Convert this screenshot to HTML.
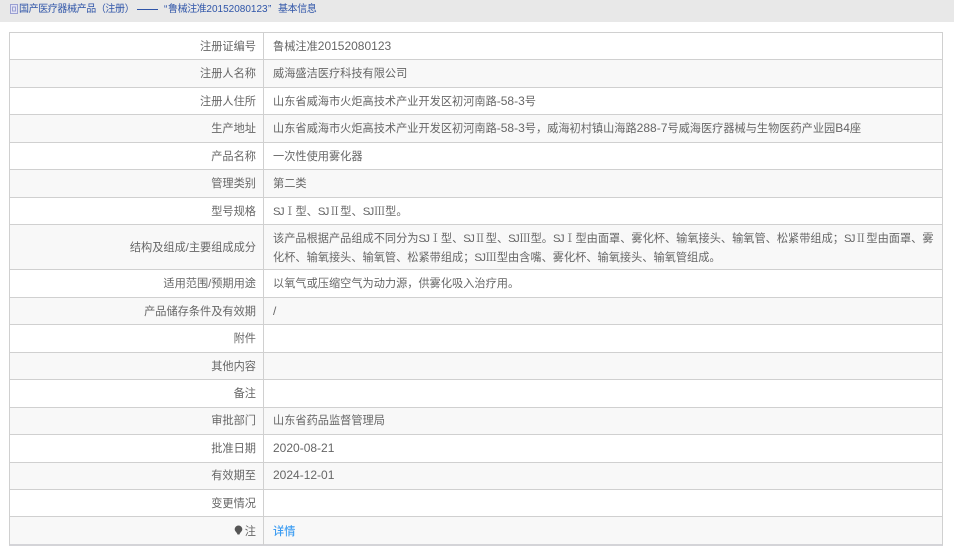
<!DOCTYPE html>
<html lang="zh-CN"><head><meta charset="utf-8">
<style>
html,body{margin:0;padding:0;background:#fff;}
body{width:954px;height:555px;position:relative;overflow:hidden;font-family:"Liberation Sans","Noto Sans CJK SC",sans-serif;font-size:11.2px;color:#666;}
#hd{position:absolute;left:0;top:0;width:954px;height:22px;background:#e8e8e8;}
#hd span{position:absolute;top:3px;line-height:14px;color:#2f55a8;white-space:nowrap;font-size:10px;letter-spacing:-.4px;}
#hd span b{font-weight:normal;font-size:10px;line-height:0;letter-spacing:0;}
#hd span i{font-style:normal;font-family:"Noto Sans CJK TC",sans-serif;line-height:0;}
#dash{position:absolute;left:137px;top:9px;width:21px;height:1px;background:#2f55a8;}
.hl{position:absolute;left:9px;width:934px;height:1px;background:#d0d0d0;}
.bg{position:absolute;left:10px;width:932px;background:#f8f8f8;}
.vl{position:absolute;top:32px;height:513px;width:1px;background:#d0d0d0;}
.l{position:absolute;right:698px;white-space:nowrap;line-height:14px;}
.v{position:absolute;left:273px;white-space:nowrap;line-height:14px;}
.n{font-size:12px;line-height:0;}
.s{font-family:"Liberation Sans",sans-serif;font-size:11.2px;letter-spacing:-1.5px;line-height:0;margin-right:1.2px;}
.r{font-family:"Noto Serif CJK SC",serif;line-height:0;}
.c{font-family:"Noto Sans CJK TC",sans-serif;line-height:0;}
</style></head><body>
<div id="hd">
<svg style="position:absolute;left:10px;top:4px" width="8" height="10" viewBox="0 0 8 10"><path d="M.5.5h7v9h-7z" fill="#e4e4f4" stroke="#9aa0d2" stroke-width="1"/><path d="M2.500 3h3v4h-3z" fill="none" stroke="#9aa0d2" stroke-width="1"/></svg>
<span style="left:19px">国产医疗器械产品<i>（</i>注册<i>）</i></span>
<div id="dash"></div>
<span style="left:164px">“</span>
<span style="left:168px">鲁械注准<b>20152080123</b></span>
<span style="left:268px">”</span>
<span style="left:278px">基本信息</span>
</div>

<div class="bg" style="top:60px;height:27px"></div>
<div class="bg" style="top:115px;height:27px"></div>
<div class="bg" style="top:170px;height:27px"></div>
<div class="bg" style="top:225px;height:44px"></div>
<div class="bg" style="top:298px;height:26px"></div>
<div class="bg" style="top:353px;height:26px"></div>
<div class="bg" style="top:408px;height:26px"></div>
<div class="bg" style="top:463px;height:26px"></div>
<div class="bg" style="top:517px;height:27px"></div>

<div class="hl" style="top:32px"></div><div class="hl" style="top:59px"></div><div class="hl" style="top:87px"></div><div class="hl" style="top:114px"></div><div class="hl" style="top:142px"></div><div class="hl" style="top:169px"></div><div class="hl" style="top:197px"></div><div class="hl" style="top:224px"></div><div class="hl" style="top:269px"></div><div class="hl" style="top:297px"></div><div class="hl" style="top:324px"></div><div class="hl" style="top:352px"></div><div class="hl" style="top:379px"></div><div class="hl" style="top:407px"></div><div class="hl" style="top:434px"></div><div class="hl" style="top:462px"></div><div class="hl" style="top:489px"></div><div class="hl" style="top:516px"></div><div class="hl" style="top:544px;height:2px;background:#d4d4d8"></div>
<div class="vl" style="left:9px"></div><div class="vl" style="left:263px"></div><div class="vl" style="left:942px"></div>

<div class="l" style="top:40px">注册证编号</div><div class="v" style="top:40px">鲁械注准<span class="n">20152080123</span></div>
<div class="l" style="top:67px">注册人名称</div><div class="v" style="top:67px">威海盛洁医疗科技有限公司</div>
<div class="l" style="top:95px">注册人住所</div><div class="v" style="top:95px">山东省威海市火炬高技术产业开发区初河南路<span class="n">-58-3</span>号</div>
<div class="l" style="top:122px">生产地址</div><div class="v" style="top:122px">山东省威海市火炬高技术产业开发区初河南路<span class="n">-58-3</span>号，威海初村镇山海路<span class="n">288-7</span>号威海医疗器械与生物医药产业园<span class="n">B4</span>座</div>
<div class="l" style="top:150px">产品名称</div><div class="v" style="top:150px">一次性使用雾化器</div>
<div class="l" style="top:177px">管理类别</div><div class="v" style="top:177px">第二类</div>
<div class="l" style="top:205px">型号规格</div><div class="v" style="top:205px"><span class="s">SJ</span><span class="r">Ⅰ</span>型、<span class="s">SJ</span><span class="r">Ⅱ</span>型、<span class="s">SJ</span><span class="r">Ⅲ</span>型。</div>
<div class="l" style="top:241px">结构及组成/主要组成成分</div>
<div class="v" style="top:232px">该产品根据产品组成不同分为<span class="s">SJ</span><span class="r">Ⅰ</span>型、<span class="s">SJ</span><span class="r">Ⅱ</span>型、<span class="s">SJ</span><span class="r">Ⅲ</span>型。<span class="s">SJ</span><span class="r">Ⅰ</span>型由面罩、雾化杯、输氧接头、输氧管、松紧带组成<span class="c">；</span><span class="s">SJ</span><span class="r">Ⅱ</span>型由面罩、雾</div>
<div class="v" style="top:251px">化杯、输氧接头、输氧管、松紧带组成<span class="c">；</span><span class="s">SJ</span><span class="r">Ⅲ</span>型由含嘴、雾化杯、输氧接头、输氧管组成。</div>
<div class="l" style="top:277px">适用范围/预期用途</div><div class="v" style="top:277px">以氧气或压缩空气为动力源，供雾化吸入治疗用。</div>
<div class="l" style="top:305px">产品储存条件及有效期</div><div class="v" style="top:305px"><span class="n">/</span></div>
<div class="l" style="top:332px">附件</div>
<div class="l" style="top:360px">其他内容</div>
<div class="l" style="top:387px">备注</div>
<div class="l" style="top:414px">审批部门</div><div class="v" style="top:414px">山东省药品监督管理局</div>
<div class="l" style="top:442px">批准日期</div><div class="v" style="top:442px"><span class="n">2020-08-21</span></div>
<div class="l" style="top:469px">有效期至</div><div class="v" style="top:469px"><span class="n">2024-12-01</span></div>
<div class="l" style="top:497px">变更情况</div>
<svg style="position:absolute;left:234px;top:525px" width="9" height="11" viewBox="0 0 9 11"><path d="M4.500.5a3.800 3.800 0 0 1 3.800 3.800c0 2-2.200 3-2.800 5.200h-2C2.900 7.300.7 6.300.7 4.300A3.800 3.800 0 0 1 4.500.5z" fill="#555"/></svg>
<div class="l" style="top:525px">注</div><div class="v" style="top:525px;color:#3b9cf2;font-weight:500">详情</div>
</body></html>
